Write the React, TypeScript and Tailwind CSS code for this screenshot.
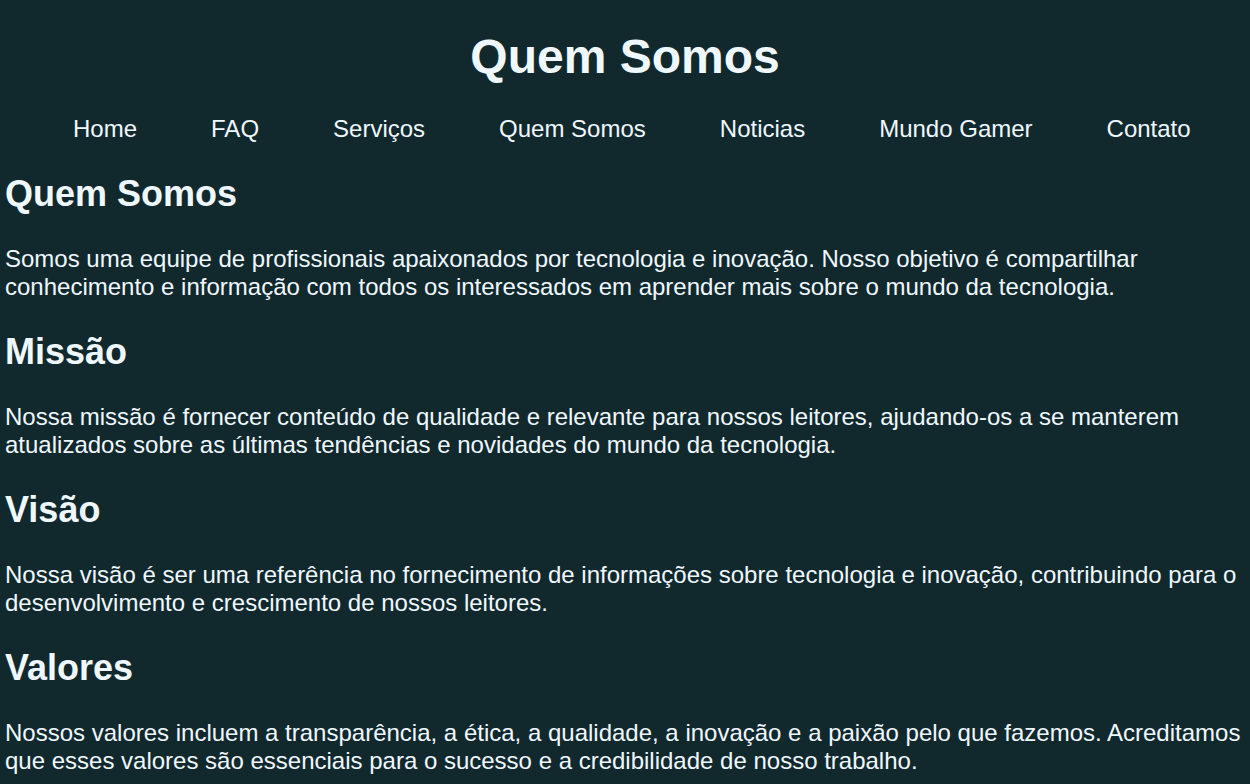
const links = ["Home", "FAQ", "Serviços", "Quem Somos", "Noticias", "Mundo Gamer", "Contato"];

const sections = [
  {
    title: "Quem Somos",
    text: "Somos uma equipe de profissionais apaixonados por tecnologia e inovação. Nosso objetivo é compartilhar conhecimento e informação com todos os interessados em aprender mais sobre o mundo da tecnologia.",
  },
  {
    title: "Missão",
    text: "Nossa missão é fornecer conteúdo de qualidade e relevante para nossos leitores, ajudando-os a se manterem atualizados sobre as últimas tendências e novidades do mundo da tecnologia.",
  },
  {
    title: "Visão",
    text: "Nossa visão é ser uma referência no fornecimento de informações sobre tecnologia e inovação, contribuindo para o desenvolvimento e crescimento de nossos leitores.",
  },
  {
    title: "Valores",
    text: "Nossos valores incluem a transparência, a ética, a qualidade, a inovação e a paixão pelo que fazemos. Acreditamos que esses valores são essenciais para o sucesso e a credibilidade de nosso trabalho.",
  },
];

export default function App() {
  return (
    <div className="min-h-screen bg-[#11292d] text-[#f0f8ff] font-['Liberation_Sans',Arial,sans-serif] pt-[29px] pb-10">
      <header>
        <h1 className="text-center text-[48px] leading-[55px] font-bold">Quem Somos</h1>
        <nav className="mt-[31px]">
          <ul className="flex gap-[74px] pl-[73px] text-[24px] leading-[28px]">
            {links.map((l) => (
              <li key={l}>
                <a href="#">{l}</a>
              </li>
            ))}
          </ul>
        </nav>
      </header>

      <main className="px-[5px]">
        {sections.map((s) => (
          <section key={s.title}>
            <h2 className="mt-[30px] text-[36px] leading-[41px] font-bold">{s.title}</h2>
            <p className="mt-[31px] text-[24px] leading-[28px]">{s.text}</p>
          </section>
        ))}
      </main>
    </div>
  );
}
